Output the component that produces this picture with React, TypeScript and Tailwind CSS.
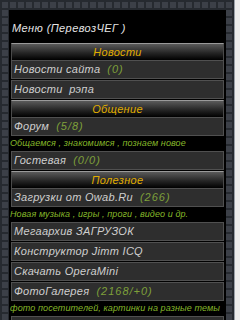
import React from "react";

type Row =
  | { kind: "bar"; title: string }
  | { kind: "item"; text: string; count?: string }
  | { kind: "desc"; text: string };

const rows: Row[] = [
  { kind: "bar", title: "Новости" },
  { kind: "item", text: "Новости сайта", count: "(0)" },
  { kind: "item", text: "Новости  рэпа" },
  { kind: "bar", title: "Общение" },
  { kind: "item", text: "Форум", count: "(5/8)" },
  { kind: "desc", text: "Общаемся , знакомимся , познаем новое" },
  { kind: "item", text: "Гостевая", count: "(0/0)" },
  { kind: "bar", title: "Полезное" },
  { kind: "item", text: "Загрузки от Owab.Ru", count: "(266)" },
  { kind: "desc", text: "Новая музыка , игры , проги , видео и др." },
  { kind: "item", text: "Мегаархив ЗАГРУЗОК" },
  { kind: "item", text: "Конструктор Jimm ICQ" },
  { kind: "item", text: "Скачать OperaMini" },
  { kind: "item", text: "ФотоГалерея", count: "(2168/+0)" },
  { kind: "desc", text: "фото посетителей, картинки на разные темы" },
  { kind: "item", text: "" },
];

const grid =
  "bg-[#3c4048] bg-[linear-gradient(to_right,#262a30_2px,transparent_2px),linear-gradient(to_bottom,#262a30_2px,transparent_2px)] bg-[size:8px_8px]";

function SectionBar({ title }: { title: string }) {
  return (
    <div className="flex h-[17px] items-center justify-center border-x border-t border-x-[#4a4a4a] border-t-[#9a9a9a] bg-[linear-gradient(to_bottom,#5a5a5a,#262626_55%,#000)] text-[11px] italic tracking-[0.3px] text-[#e0ad00]">
      {title}
    </div>
  );
}

function Item({ text, count }: { text: string; count?: string }) {
  return (
    <div className="mb-px flex h-[19px] items-center gap-[7px] whitespace-pre border border-[#505050] bg-[#2e2e2e] pl-[2px] text-[11px] italic tracking-[0.3px] text-[#cfcfcf]">
      <span>{text}</span>
      {count && <span className="tracking-[1px] text-[#7ea03a]">{count}</span>}
    </div>
  );
}

export default function App() {
  return (
    <div
      className={`flex h-[320px] w-[240px] overflow-hidden font-['Liberation_Sans',sans-serif] ${grid}`}
    >
      <div className="w-[234px] pl-[9px] pt-[10px]">
        <div className="h-full w-[217px] bg-black px-[2px]">
          <div className="flex h-[33px] items-center whitespace-pre pl-[1px] pt-[4px] text-[11px] italic tracking-[0.4px] text-[#e4e4e4]">
            Меню (ПеревозЧЕГ )
          </div>
          {rows.map((r, i) =>
            r.kind === "bar" ? (
              <SectionBar key={i} title={r.title} />
            ) : r.kind === "item" ? (
              <Item key={i} text={r.text} count={r.count} />
            ) : (
              <div
                key={i}
                className="-mx-[2px] -mt-px flex h-[15px] items-center whitespace-nowrap pl-[1px] text-[9px] italic tracking-[0.1px] text-[#86b82a]"
              >
                {r.text}
              </div>
            )
          )}
        </div>
      </div>
      <div className="h-full w-[6px] border-l border-[#9aa0a8] bg-[#ececec]" />
    </div>
  );
}
